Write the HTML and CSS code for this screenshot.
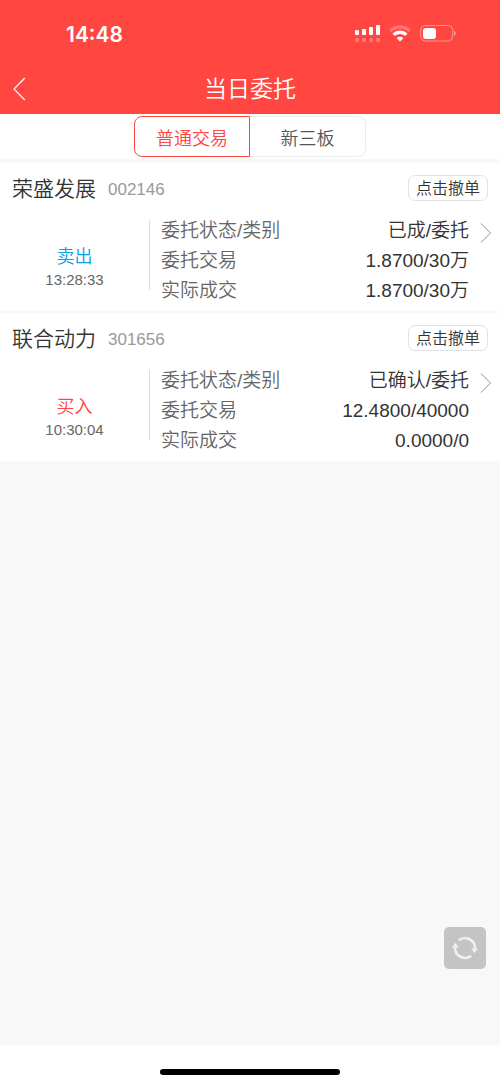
FILE: index.html
```html
<!DOCTYPE html>
<html lang="zh-CN">
<head>
<meta charset="utf-8">
<meta name="viewport" content="width=device-width, initial-scale=1">
<title>当日委托</title>
<link rel="stylesheet" href="styles.css">
</head>
<body>
<div class="app">
  <header class="header">
    <div class="status">
      <span class="clock">14:48</span>
      <span class="indicators">
        <svg class="signal" width="25" height="18" viewBox="0 0 25 18" fill="#fff" aria-hidden="true">
          <rect x="0" y="6" width="4" height="5" rx="1"/><rect x="7" y="5" width="4" height="6" rx="1"/><rect x="14" y="3" width="4" height="8" rx="1"/><rect x="21" y="1" width="4" height="10" rx="1"/>
          <g opacity=".25"><rect x="0" y="14" width="4" height="4" rx="1"/><rect x="7" y="14" width="4" height="4" rx="1"/><rect x="14" y="14" width="4" height="4" rx="1"/><rect x="21" y="14" width="4" height="4" rx="1"/></g>
        </svg>
        <svg class="wifi" width="22" height="18" viewBox="0 0 22 18" fill="none" stroke="#fff" aria-hidden="true">
          <path d="M1.200 7a14 14 0 0 1 19.600 0" stroke-width="3.400" opacity=".25"/>
          <path d="M4.700 10.800a9 9 0 0 1 12.600 0" stroke-width="3.400"/>
          <path d="M11 17.500l-3.400-3.300a4.800 4.800 0 0 1 6.800 0z" fill="#fff" stroke="none"/>
        </svg>
        <svg class="battery" width="36" height="18" viewBox="0 0 36 18" fill="none" aria-hidden="true">
          <rect x=".7" y="1.500" width="32" height="15.500" rx="4.800" stroke="#fff" stroke-opacity=".4" stroke-width="1.200"/>
          <rect x="3" y="4" width="13" height="11" rx="3" fill="#fff"/>
          <path d="M34.200 6.700c2 .8 2 4.300 0 5.100z" fill="#fff" fill-opacity=".5"/>
        </svg>
      </span>
    </div>
    <div class="navbar">
      <button class="back" type="button" aria-label="返回"><svg width="14" height="24" viewBox="0 0 14 24" fill="none" stroke="#fff" stroke-width="1.200"><path d="M11.800 1L1 12l10.800 11"/></svg></button>
      <h1 class="title">当日委托</h1>
    </div>
  </header>
  <nav class="tabs">
    <button class="tab tab-active" type="button">普通交易</button>
    <button class="tab" type="button">新三板</button>
  </nav>
  <main class="orders">
    <article class="order">
      <div class="order-head">
        <h2 class="name">荣盛发展</h2><span class="code">002146</span>
        <button class="cancel" type="button">点击撤单</button>
      </div>
      <div class="order-body">
        <div class="side"><span class="action sell">卖出</span><time class="time">13:28:33</time></div>
        <dl class="details">
          <div class="row"><dt>委托状态/类别</dt><dd>已成/委托</dd></div>
          <div class="row"><dt>委托交易</dt><dd>1.8700/30万</dd></div>
          <div class="row"><dt>实际成交</dt><dd>1.8700/30万</dd></div>
        </dl>
        <a class="more" href="#" aria-label="查看详情"><svg width="12" height="20" viewBox="0 0 12 20" fill="none" stroke="#929292"><path d="M1 .5L10.500 10 1 19.500"/></svg></a>
      </div>
    </article>
    <article class="order">
      <div class="order-head">
        <h2 class="name">联合动力</h2><span class="code">301656</span>
        <button class="cancel" type="button">点击撤单</button>
      </div>
      <div class="order-body">
        <div class="side"><span class="action buy">买入</span><time class="time">10:30:04</time></div>
        <dl class="details">
          <div class="row"><dt>委托状态/类别</dt><dd>已确认/委托</dd></div>
          <div class="row"><dt>委托交易</dt><dd>12.4800/40000</dd></div>
          <div class="row"><dt>实际成交</dt><dd>0.0000/0</dd></div>
        </dl>
        <a class="more" href="#" aria-label="查看详情"><svg width="12" height="20" viewBox="0 0 12 20" fill="none" stroke="#929292"><path d="M1 .5L10.500 10 1 19.500"/></svg></a>
      </div>
    </article>
  </main>
  <footer class="footer"><span class="home"></span></footer>
  <button class="refresh" type="button" aria-label="刷新">
    <svg width="26" height="24" viewBox="0 0 26 24" fill="none" stroke="#f0f0f0" stroke-width="2.600" aria-hidden="true">
      <path d="M6.800 4.300A10 10 0 0 1 23 12.500"/>
      <path d="M19.200 19.700A10 10 0 0 1 3 11.500"/>
      <path d="M19 12.300h7l-3.400 5zM0 11.700h7L3.400 6.700z" fill="#f0f0f0" stroke="none"/>
    </svg>
  </button>
</div>
</body>
</html>
```

FILE: styles.css
```css
* {
  box-sizing: border-box;
}

body {
  margin: 0;
  color: #333;
  background: #f8f8f8;
  font-family: "Liberation Sans", "Noto Sans CJK SC", sans-serif;
  font-weight: 350;
}

button {
  margin: 0;
  padding: 0;
  border: 0;
  background: none;
  color: inherit;
  font: inherit;
}

h1,
h2,
dl,
dd {
  margin: 0;
  font-weight: inherit;
}

svg {
  display: block;
}

.app {
  display: flex;
  flex-direction: column;
  min-height: 100vh;
}

.header {
  color: #fff;
  background: #ff4640;
}

.status {
  display: flex;
  align-items: center;
  justify-content: space-between;
  height: 64px;
  padding: 6px 44px 0 66px;
}

.clock {
  font: 600 21px/24px Inter, sans-serif;
}

.indicators {
  display: flex;
  align-items: center;
  gap: 9px;
  padding-bottom: 4px;
}

.navbar {
  display: grid;
  grid-template-columns: 48px 1fr 48px;
  align-items: center;
  height: 50px;
}

.back {
  padding-left: 13px;
}

.title {
  font-size: 23px;
  line-height: 32px;
  text-align: center;
}

.tabs {
  display: flex;
  justify-content: center;
  padding: 2px 0;
  border-bottom: 4px solid #f8f8f8;
  background: #fff;
}

.tab {
  width: 116px;
  height: 41px;
  border: 1px solid #ebebeb;
  border-left: 0;
  border-radius: 0 8px 8px 0;
  color: #555;
  font-size: 18px;
}

.tab-active {
  border: 1px solid #ff4640;
  border-radius: 8px 0 0 8px;
  color: #ff4640;
}

.orders {
  display: flex;
  flex: 1;
  flex-direction: column;
  gap: 2px;
}

.order {
  padding: 12px 0 5px;
  background: #fff;
}

.order-head {
  display: flex;
  align-items: center;
  padding: 0 12px;
}

.name {
  padding-top: 2px;
  font-size: 21px;
  line-height: 24px;
}

.code {
  padding-top: 3px;
  margin-left: 12px;
  color: #999;
  font-size: 17px;
}

.cancel {
  width: 80px;
  height: 26px;
  padding-top: 1px;
  margin-left: auto;
  border: 1px solid #e2e2e2;
  border-radius: 7px;
  font-size: 16px;
  line-height: 23px;
}

.order-body {
  display: flex;
  margin-top: 15px;
}

.side {
  display: flex;
  flex: 0 0 30%;
  flex-direction: column;
  align-items: center;
  align-self: flex-start;
  height: 70px;
  margin-top: 4px;
  padding-top: 24px;
  border-right: 1px solid #ddd;
}

.action {
  font-size: 18px;
  line-height: 26px;
}

.sell {
  color: #0a9de8;
}

.buy {
  color: #ff4640;
}

.time {
  color: #666;
  font-size: 15px;
  line-height: 20px;
}

.details {
  flex: 1;
  padding-left: 11px;
  font-size: 19px;
  line-height: 30px;
}

.row {
  display: flex;
  justify-content: space-between;
}

.row dt {
  color: #666;
}

.more {
  width: 31px;
  padding: 7px 0 0 11px;
}

.footer {
  display: flex;
  justify-content: center;
  padding: 24px 0 9px;
  background: #fff;
}

.home {
  width: 36%;
  height: 6px;
  border-radius: 3px;
  background: #000;
}

.refresh {
  display: flex;
  position: fixed;
  right: 14px;
  bottom: 115px;
  align-items: center;
  justify-content: center;
  width: 42px;
  height: 42px;
  border-radius: 5px;
  background: #c4c4c4;
}
```
